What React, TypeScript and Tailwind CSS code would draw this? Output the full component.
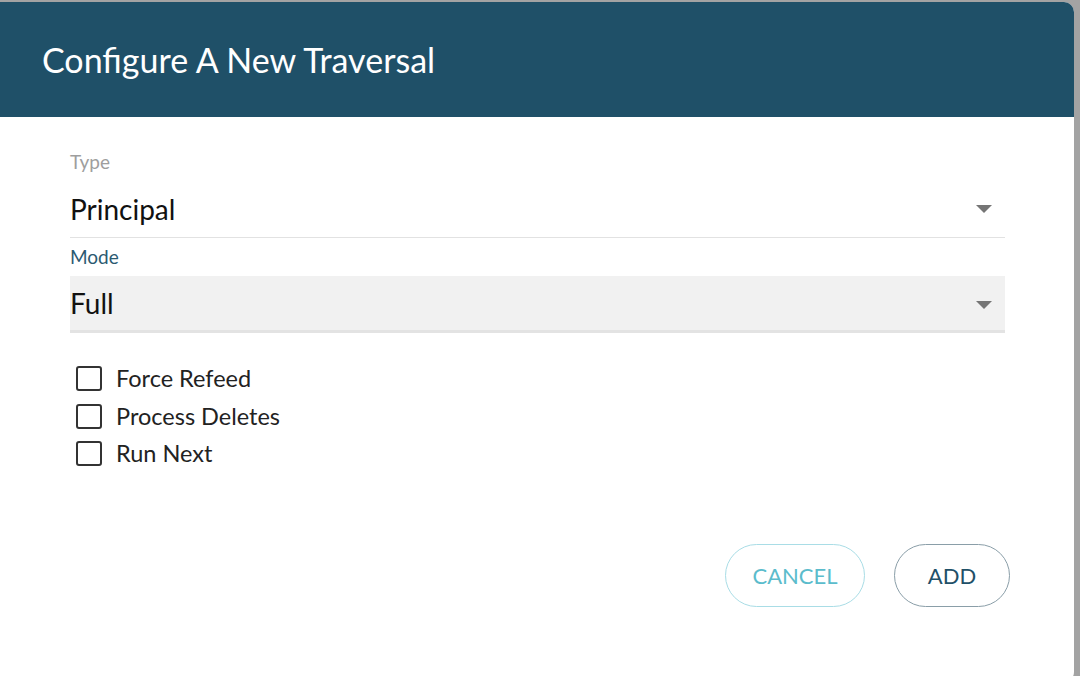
import { useState } from 'react';

const font = { fontFamily: 'Lato, "Noto Sans", sans-serif' };

function Arrow() {
  return (
    <svg width="18" height="10" viewBox="0 0 18 10" className="shrink-0">
      <path d="M1 1 L17 1 L9 9 Z" fill="#757575" />
    </svg>
  );
}

function Check({ label }: { label: string }) {
  const [on, setOn] = useState(false);
  return (
    <label className="flex items-center h-[37.5px] cursor-pointer pl-[6px]" onClick={() => setOn(!on)}>
      <span className="w-[26px] h-[25px] rounded-[3px] border-[2.5px] border-[#333] shrink-0" />
      <span className="text-[23.5px] text-[#222] ml-[14px]">{label}</span>
    </label>
  );
}

export default function App() {
  return (
    <div className="w-[1080px] h-[676px] bg-[#a3a3a3] pt-[2px] overflow-hidden" style={font}>
      <div className="w-[1074px] h-[680px] bg-white rounded-tr-[10px] rounded-br-[10px] overflow-hidden flex flex-col">
        {/* Header */}
        <header className="h-[115px] bg-[#1f5068] flex items-center px-[42px] shrink-0">
          <h1 className="text-[34px] text-white font-normal leading-none">Configure A New Traversal</h1>
        </header>

        {/* Body */}
        <div className="pl-[70px] pr-[69px] pt-[35px]">
          {/* Type */}
          <div className="text-[19px] text-[#9e9e9e] h-[20px] flex items-center">Type</div>
          <div className="flex items-center justify-between h-[66px] pt-[9px] border-b border-[#e2e2e2]">
            <span className="text-[28px] text-[#111]">Principal</span>
            <span className="pr-[12px]"><Arrow /></span>
          </div>

          {/* Mode */}
          <div className="text-[19px] text-[#2b5a71] h-[38px] flex items-center">Mode</div>
          <div className="flex items-center justify-between h-[57px] bg-[#f1f1f1] border-b-[3px] border-[#e3e3e3]">
            <span className="text-[28px] text-[#111]">Full</span>
            <span className="pr-[12px] pt-[4px]"><Arrow /></span>
          </div>

          {/* Options */}
          <div className="mt-[27px] flex flex-col">
            <Check label="Force Refeed" />
            <Check label="Process Deletes" />
            <Check label="Run Next" />
          </div>

          {/* Actions */}
          <div className="flex justify-end gap-[29px] mt-[71px]">
            <button className="w-[140px] h-[63px] rounded-full border border-[#a9dde6] text-[#5bbccc] text-[22px]">CANCEL</button>
            <button className="w-[116px] h-[63px] rounded-full border border-[#8a9ea8] text-[#1f5068] text-[22px] mr-[-5px]">ADD</button>
          </div>
        </div>
      </div>
    </div>
  );
}
